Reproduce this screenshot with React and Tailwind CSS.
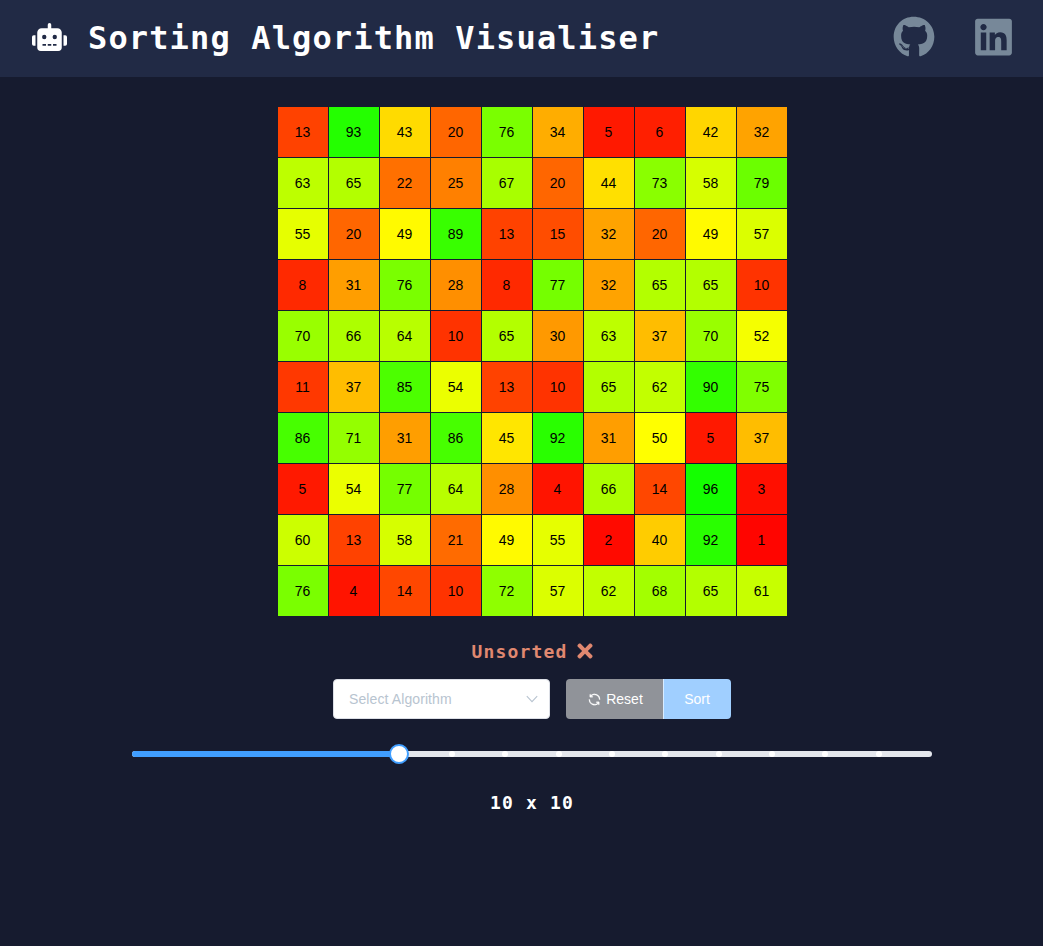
import React from "react";
import { FaRobot, FaGithub, FaLinkedin, FaTimes } from "react-icons/fa";

const ROWS = [
  [13, 93, 43, 20, 76, 34, 5, 6, 42, 32],
  [63, 65, 22, 25, 67, 20, 44, 73, 58, 79],
  [55, 20, 49, 89, 13, 15, 32, 20, 49, 57],
  [8, 31, 76, 28, 8, 77, 32, 65, 65, 10],
  [70, 66, 64, 10, 65, 30, 63, 37, 70, 52],
  [11, 37, 85, 54, 13, 10, 65, 62, 90, 75],
  [86, 71, 31, 86, 45, 92, 31, 50, 5, 37],
  [5, 54, 77, 64, 28, 4, 66, 14, 96, 3],
  [60, 13, 58, 21, 49, 55, 2, 40, 92, 1],
  [76, 4, 14, 10, 72, 57, 62, 68, 65, 61],
];

const STOPS = [6, 7, 8, 9, 10, 11, 12, 13, 14];

function Header() {
  return (
    <header className="flex h-[77px] items-center justify-between bg-[#212a45] pl-8 pr-[31px]">
      <div className="flex items-center text-white">
        <FaRobot className="mt-[-3px] h-[28px] w-[35px]" />
        <h1 className="ml-[21px] mt-[-2px] whitespace-pre font-['DejaVu_Sans_Mono',monospace] text-[32px] font-bold leading-[48px] tracking-[1.14px]">
          Sorting Algorithm Visualiser
        </h1>
      </div>
      <nav className="mt-[-4px] flex items-center gap-[40px] text-[#778899]">
        <a href="#github" aria-label="GitHub"><FaGithub className="h-[42px] w-[42px]" /></a>
        <a href="#linkedin" aria-label="LinkedIn"><FaLinkedin className="h-[42px] w-[37px]" /></a>
      </nav>
    </header>
  );
}

function Grid() {
  return (
    <div className="mt-[30px] grid grid-cols-[repeat(10,50px)] gap-px pl-px">
      {ROWS.flat().map((value, i) => (
        <div
          key={i}
          className="flex h-[50px] items-center justify-center pr-px text-[14px] text-black"
          style={{ backgroundColor: `hsl(${value * 1.2}, 100%, 50%)` }}
        >
          {value}
        </div>
      ))}
    </div>
  );
}

function Slider() {
  return (
    <div className="relative mt-8 h-[6px] w-[800px] rounded-[3px] bg-[#e4e7ed]">
      <div className="h-full w-1/3 rounded-l-[3px] bg-[#409eff]" />
      {STOPS.map((s) => (
        <span
          key={s}
          className="absolute top-0 size-[6px] -translate-x-1/2 rounded-full bg-white"
          style={{ left: `${(s / 15) * 100}%` }}
        />
      ))}
      <span className="absolute left-1/3 top-[-7px] size-5 -translate-x-1/2 rounded-full border-2 border-[#409eff] bg-white" />
    </div>
  );
}

export default function App() {
  return (
    <div className="min-h-screen bg-[#161b2f] font-['Liberation_Sans',Arial,sans-serif]">
      <Header />
      <main className="flex flex-col items-center pl-[21px]">
        <Grid />
        <div className="mt-[23px] flex h-6 items-center gap-[10px] pl-px text-[#e08870]">
          <span className="pt-[2px] font-['DejaVu_Sans_Mono',monospace] text-[18px] font-bold leading-6 tracking-[1.16px]">Unsorted</span>
          <FaTimes className="h-[22px] w-4" />
        </div>
        <div className="mt-4 flex gap-4 text-[14px]">
          <div className="flex h-10 w-[217px] items-center justify-between rounded border border-[#dcdfe6] bg-white pl-[15px] pr-[11px] text-[#b8c4d0]">
            <span className="tracking-[0.1px]">Select Algorithm</span>
            <svg className="h-[12px] w-[12px]" viewBox="0 0 12 12" fill="none" stroke="currentColor" strokeWidth="1.1">
              <path d="M0.8 3.2 6 8.6l5.2-5.4" />
            </svg>
          </div>
          <div className="flex h-10 overflow-hidden rounded text-white">
            <button className="flex w-[97px] items-center justify-center gap-1 bg-[#909399] pl-px">
              <svg className="h-[15px] w-[15px]" viewBox="0 0 1024 1024" fill="currentColor" stroke="currentColor" strokeWidth="20">
                <path d="M771.776 794.88A384 384 0 0 1 128 512h64a320 320 0 0 0 555.712 216.448H654.72a32 32 0 1 1 0-64h149.056a32 32 0 0 1 32 32v148.928a32 32 0 1 1-64 0v-50.56zM276.288 295.616h92.992a32 32 0 0 1 0 64H220.16a32 32 0 0 1-32-32V178.56a32 32 0 0 1 64 0v50.56A384 384 0 0 1 896.128 512h-64a320 320 0 0 0-555.776-216.384z" />
              </svg>
              Reset
            </button>
            <button className="w-[68px] border-l border-white/60 bg-[#a0cfff] pr-px">Sort</button>
          </div>
        </div>
        <Slider />
        <p className="mt-[34px] whitespace-pre font-['DejaVu_Sans_Mono',monospace] text-[18px] font-bold leading-6 tracking-[1.16px] text-white">10 x 10</p>
      </main>
    </div>
  );
}
